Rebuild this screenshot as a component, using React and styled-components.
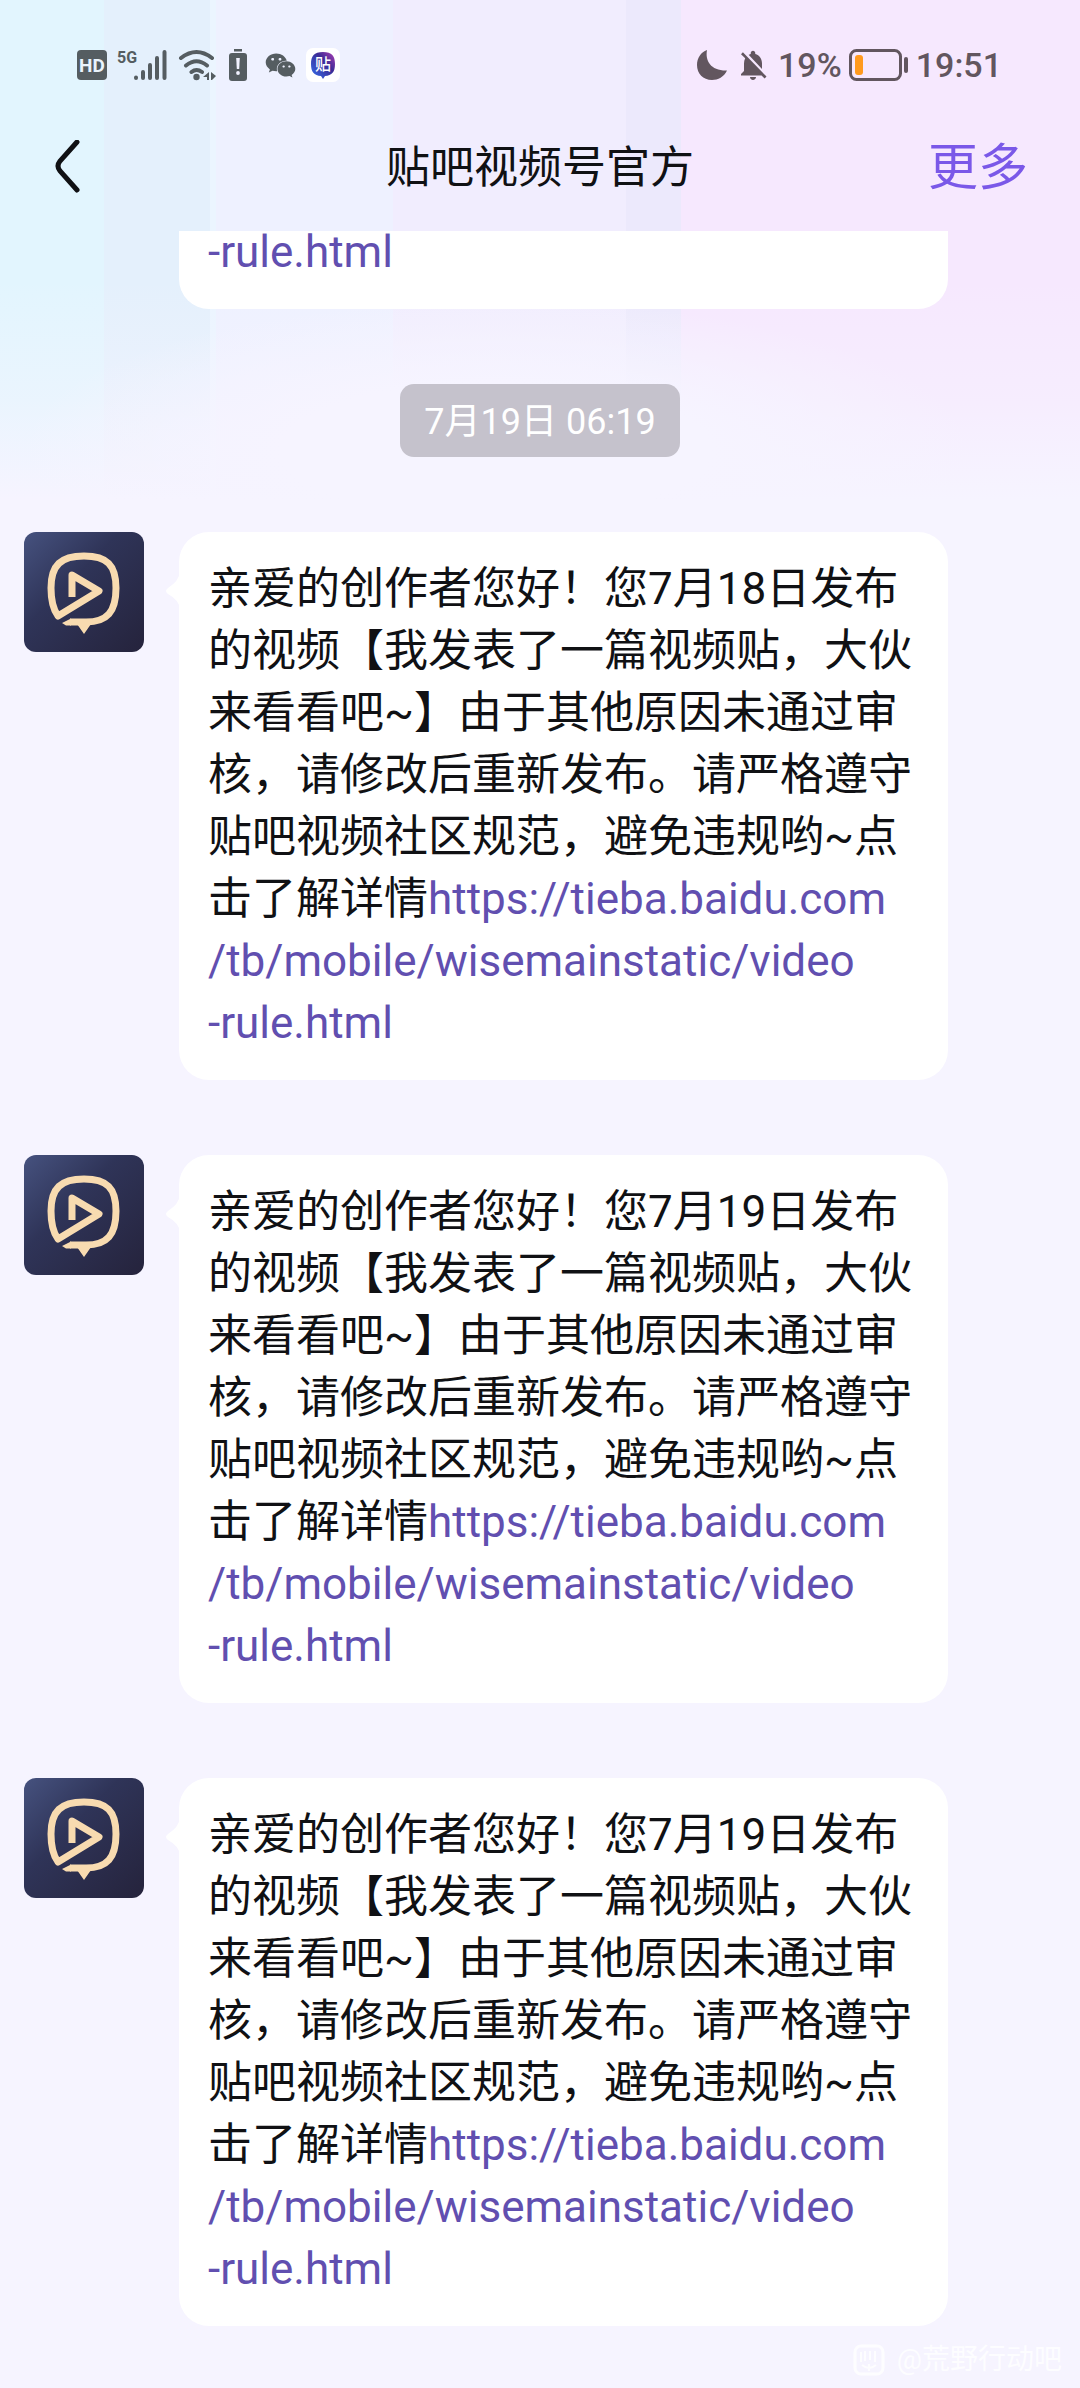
import React from "react"
import styled, { createGlobalStyle } from "styled-components"
import { FaWeixin } from "react-icons/fa6"
import { MdNotificationsOff } from "react-icons/md"

const COLOR_PAGE = "#f6f4ff"
const COLOR_TEXT = "#101114"
const COLOR_LINK = "#614fb0"
const COLOR_ACTION = "#7a58e8"
const COLOR_STATUS_LEFT = "#555d61"
const COLOR_STATUS_RIGHT = "#62565f"
const COLOR_GOLD = "#f8dbb0"

const GlobalStyle = createGlobalStyle`
  * {
    box-sizing: border-box;
  }

  body {
    margin: 0;
    color: ${COLOR_TEXT};
    font-family: Roboto, "Noto Sans CJK SC", sans-serif;
  }
`

const Page = styled.div`
  min-height: 100vh;
  display: flex;
  flex-direction: column;
  overflow: hidden;
  background-color: ${COLOR_PAGE};
  background-image:
    radial-gradient(
      ellipse 44% 150px at 46% 450px,
      ${COLOR_PAGE} 45%,
      rgba(246, 244, 255, 0) 100%
    ),
    linear-gradient(
      to bottom,
      rgba(246, 244, 255, 0) 280px,
      rgba(246, 244, 255, 0.4) 400px,
      ${COLOR_PAGE} 500px
    ),
    linear-gradient(
      to right,
      #e2f5fe 9.6%,
      #e4f0fc 9.6% 19.4%,
      #ebf5ff 19.4% 20%,
      #eef1ff 20% 36.4%,
      #f1edfe 36.4% 58%,
      #ece9fc 58% 63.1%,
      #f6e8fe 63.1%
    );
  background-size:
    100% 620px,
    100% 620px,
    100% 500px;
  background-repeat: no-repeat;
`

const StatusBar = styled.div`
  display: flex;
  align-items: center;
  justify-content: space-between;
  height: 104px;
  padding: 26px 78px 0 77px;
`

const StatusGroup = styled.div`
  display: flex;
  align-items: center;
  gap: ${(props) => props.$gap}px;
  color: ${(props) => props.$color};
  font-size: 34px;
  font-weight: 500;
  line-height: 40px;

  svg {
    flex: none;
    display: block;
  }
`

const Header = styled.header`
  display: grid;
  grid-template-columns: 1fr auto 1fr;
  align-items: center;
  height: 127px;
  padding: 0 52px;
`

const Title = styled.h1`
  margin: 0;
  font-size: 44px;
  font-weight: 400;
  line-height: 62px;
`

const HeaderButton = styled.button`
  justify-self: ${(props) => props.$side};
  display: flex;
  align-items: center;
  padding: 0;
  border: 0;
  background: none;
  color: ${(props) => props.$color};
  font-family: inherit;
  font-size: 50px;
  line-height: 62px;
  cursor: pointer;
`

const Thread = styled.main`
  display: flex;
  flex-direction: column;
  gap: 75px;
`

const Row = styled.div`
  display: flex;
  align-items: flex-start;
  gap: 35px;
  padding: 0 132px 0 24px;
`

const AvatarSlot = styled.div`
  flex: none;
  width: 120px;
  height: ${(props) => (props.$empty ? 0 : 120)}px;
  border-radius: 12px;
  overflow: hidden;

  svg {
    display: block;
  }
`

const Bubble = styled.div`
  position: relative;
  flex: 1;
  padding: 26px 30px 26px 29px;
  border-radius: 30px;
  background: #fff;
  font-size: 44px;
  line-height: 62px;
`

// bottom of a message that has scrolled under the header
const CutBubble = styled(Bubble)`
  display: flex;
  align-items: flex-end;
  height: 78px;
  padding-top: 0;
  border-radius: 0 0 30px 30px;
`

const Tail = styled.svg`
  position: absolute;
  top: 40px;
  left: -14px;
`

const Text = styled.p`
  margin: 0;
`

const Link = styled.a`
  color: ${COLOR_LINK};
  text-decoration: none;
`

const TimeStamp = styled.time`
  align-self: center;
  padding: 13px 24px 10px;
  border-radius: 14px;
  background: #c5c2cc;
  color: #fff;
  font-size: 36px;
  line-height: 50px;
`

const Watermark = styled.footer`
  display: flex;
  align-items: center;
  justify-content: flex-end;
  gap: 12px;
  padding: 18px 18px 12px;
  color: #fdfdff;
  font-size: 28px;
  line-height: 32px;
`

const HdIcon = () => (
  <svg width="30" height="30" viewBox="0 0 30 30">
    <rect width="30" height="30" rx="4" fill="currentColor" />
    <text
      x="15"
      y="22"
      textAnchor="middle"
      fill="#eaf4fd"
      fontSize="19"
      fontWeight="700"
    >
      HD
    </text>
  </svg>
)

const SignalIcon = () => (
  <svg width="51" height="34" viewBox="0 0 51 34">
    <text
      x="0"
      y="15"
      fill="currentColor"
      fontFamily="Roboto"
      fontSize="16"
      fontWeight="700"
    >
      5G
    </text>
    <g stroke="currentColor" strokeWidth="4" strokeLinecap="round">
      <path d="M19 29.5V30M26 24V30M33 17V30M40 10V30M47.500 4V30" />
    </g>
  </svg>
)

const WifiIcon = () => (
  <svg width="39" height="34" viewBox="0 0 39 34">
    <g
      fill="none"
      stroke="currentColor"
      strokeWidth="4"
      strokeLinecap="round"
    >
      <path d="M3 10Q18.500 -2 34 10M8 17.500Q18.500 9 29 17.500M13.500 24Q18.500 20 24 24" />
    </g>
    <circle cx="18.500" cy="29" r="3.200" fill="currentColor" />
    <path d="M31 24v8h-2v-3l-4 0z M33 24l5 4-4 4h-1z" fill="currentColor" />
  </svg>
)

const BatteryAlertIcon = () => (
  <svg width="28" height="34" viewBox="-2 0 28 34">
    <rect x="5" y="1" width="8" height="2.500" fill="currentColor" />
    <rect y="5" width="18" height="28" rx="3" fill="currentColor" />
    <path d="M7.200 10h3.600l-.6 11H7.800z" fill="#f1f2ff" />
    <circle cx="9" cy="25" r="1.900" fill="#f1f2ff" />
  </svg>
)

const TiebaIcon = () => (
  <svg width="34" height="34" viewBox="0 0 34 34">
    <defs>
      <linearGradient id="tieba" x1="1" y1="0" x2="0" y2="1">
        <stop offset="0" stopColor="#b13fb4" />
        <stop offset="0.4" stopColor="#3b2b96" />
        <stop offset="1" stopColor="#3570ee" />
      </linearGradient>
    </defs>
    <rect width="34" height="34" rx="7" fill="#fff" />
    <path
      d="M17 4C26 4 29 8 29 16C29 24 26 27.500 19 28L17 31L15 28C8 27.500 5 24 5 16C5 8 8 4 17 4Z"
      fill="url(#tieba)"
    />
    <text
      x="17"
      y="22"
      textAnchor="middle"
      fill="#fff"
      fontSize="16"
      fontWeight="500"
    >
      贴
    </text>
  </svg>
)

const MoonIcon = () => (
  <svg width="32" height="32" viewBox="0 0 32 32">
    <path
      d="M11 1C9 12 15 22 31 21.500C28 28 22 31 16 31C7 31 1 24.500 1 16C1 9 5 3 11 1Z"
      fill="currentColor"
    />
  </svg>
)

const BatteryIcon = () => (
  <svg width="60" height="32" viewBox="0 0 60 32">
    <rect
      x="1.500"
      y="1.500"
      width="50"
      height="29"
      rx="6"
      fill="none"
      stroke="currentColor"
      strokeWidth="3"
    />
    <rect x="6" y="6" width="8" height="20" rx="3" fill="#ff9a1e" />
    <rect x="55" y="8" width="4" height="16" rx="2" fill="currentColor" />
  </svg>
)

const BackIcon = () => (
  <svg width="30" height="56" viewBox="0 2 30 56">
    <path
      d="M25 4L8 23Q4 28 8 33L25 52"
      fill="none"
      stroke="currentColor"
      strokeWidth="5"
      strokeLinecap="round"
    />
  </svg>
)

const Avatar = () => (
  <svg width="120" height="120" viewBox="0 0 120 120" role="img">
    <title>贴吧视频号官方</title>
    <defs>
      <linearGradient id="night" x1="0" y1="0" x2="1" y2="1">
        <stop offset="0" stopColor="#46527f" />
        <stop offset="0.4" stopColor="#2f3458" />
        <stop offset="1" stopColor="#25233c" />
      </linearGradient>
    </defs>
    <rect width="120" height="120" fill="url(#night)" />
    <path
      d="M48 65V43L75 59L34 84C28 76 27 67 27 56C27 33 37 24 60 24C83 24 92 33 92 56C92 80 83 90 62 90H46"
      fill="none"
      stroke={COLOR_GOLD}
      strokeWidth="7"
      strokeLinejoin="round"
    />
    <path d="M38 91L47 86.500V93.500H42ZM53 92H67L60 102Z" fill={COLOR_GOLD} />
  </svg>
)

const WatermarkIcon = () => (
  <svg width="32" height="32" viewBox="0 0 32 32">
    <rect
      x="2"
      y="2"
      width="28"
      height="28"
      rx="6"
      fill="none"
      stroke="currentColor"
      strokeWidth="3"
    />
    <path
      d="M8 8V18M12 7V17M17 7V16M22 7V18M9 21Q16 27 23 21M16 20V27"
      fill="none"
      stroke="currentColor"
      strokeWidth="2"
    />
  </svg>
)

const RULE_URL = [
  "https://tieba.baidu.com",
  "/tb/mobile/wisemainstatic/video",
  "-rule.html",
]

const MESSAGES = [
  { id: 1, day: "7月18日" },
  { id: 2, day: "7月19日" },
  { id: 3, day: "7月19日" },
]

const noticeFor = (day) =>
  `亲爱的创作者您好！您${day}发布的视频【我发表了一篇视频贴，大伙来看看吧~】由于其他原因未通过审核，请修改后重新发布。请严格遵守贴吧视频社区规范，避免违规哟~点击了解详情`

const RuleLink = () => (
  <Link href={RULE_URL.join("")}>
    {RULE_URL[0]}
    <br />
    {RULE_URL[1]}
    <br />
    {RULE_URL[2]}
  </Link>
)

const Message = ({ day }) => (
  <Row>
    <AvatarSlot>
      <Avatar />
    </AvatarSlot>
    <Bubble>
      <Tail width="15" height="38" viewBox="0 0 15 38" aria-hidden="true">
        <path d="M15 0Q14 9 3 16Q-1 19 3 22Q14 28 15 37Z" fill="#fff" />
      </Tail>
      <Text>
        {noticeFor(day)}
        <RuleLink />
      </Text>
    </Bubble>
  </Row>
)

export default function App() {
  return (
    <Page lang="zh-CN">
      <GlobalStyle />
      <StatusBar>
        <StatusGroup $gap={10} $color={COLOR_STATUS_LEFT}>
          <HdIcon />
          <SignalIcon />
          <WifiIcon />
          <BatteryAlertIcon />
          <FaWeixin size={31} />
          <TiebaIcon />
        </StatusGroup>
        <StatusGroup $gap={7} $color={COLOR_STATUS_RIGHT}>
          <MoonIcon />
          <MdNotificationsOff size={36} />
          <span>19%</span>
          <BatteryIcon />
          <span>19:51</span>
        </StatusGroup>
      </StatusBar>

      <Header>
        <HeaderButton $side="start" $color={COLOR_TEXT} aria-label="返回">
          <BackIcon />
        </HeaderButton>
        <Title>贴吧视频号官方</Title>
        <HeaderButton $side="end" $color={COLOR_ACTION}>
          更多
        </HeaderButton>
      </Header>

      <Thread>
        <Row>
          <AvatarSlot $empty />
          <CutBubble>
            <Link href={RULE_URL.join("")}>{RULE_URL[2]}</Link>
          </CutBubble>
        </Row>
        <TimeStamp>7月19日 06:19</TimeStamp>
        {MESSAGES.map((message) => (
          <Message key={message.id} day={message.day} />
        ))}
      </Thread>

      <Watermark>
        <WatermarkIcon />
        <span>@荒野行动吧</span>
      </Watermark>
    </Page>
  )
}
